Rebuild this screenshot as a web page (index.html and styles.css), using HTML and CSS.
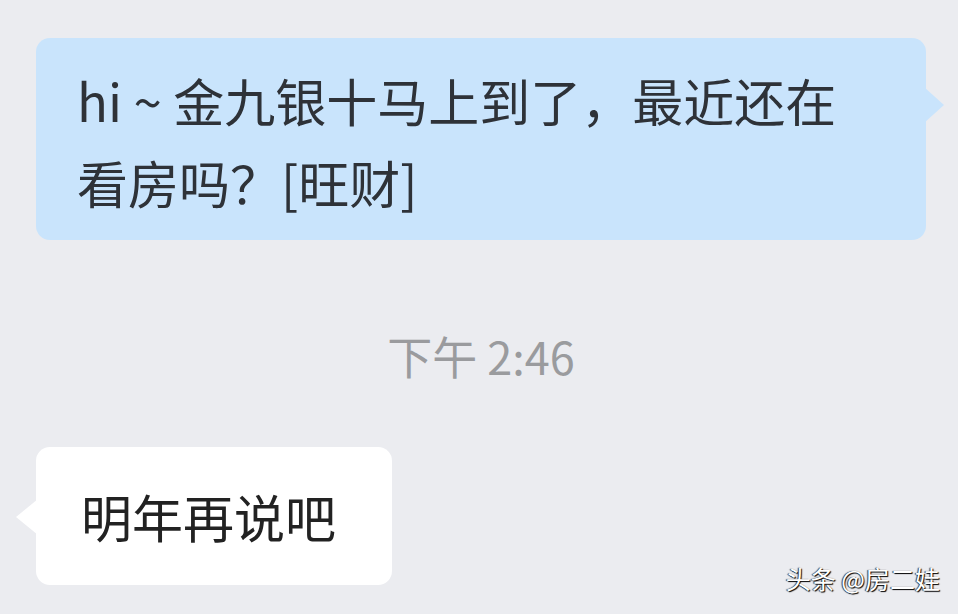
FILE: index.html
```html
<!DOCTYPE html>
<html lang="zh-CN">
<head>
  <meta charset="UTF-8" />
  <title>聊天</title>
  <link rel="stylesheet" href="styles.css">
</head>
<body>
  <div class="chat">
    <div class="row row-right">
      <div class="bubble bubble-blue">hi ~ 金九银十马上到了，最近还在<br>看房吗？[旺财]</div>
    </div>
    <div class="time">下午 2:46</div>
    <div class="row row-left">
      <div class="bubble bubble-white">明年再说吧</div>
    </div>
  </div>
  <div class="mark">头条 @房二娃</div>
</body>
</html>
```

FILE: styles.css
```css
body {
  margin: 0;
  width: 958px;
  height: 614px;
  overflow: hidden;
  background: #ebecf0;
  font-family: "Noto Sans CJK SC", "Noto Sans", sans-serif;
  position: relative;
}

.chat {
  display: flex;
  flex-direction: column;
  padding: 38px 32px 0 36px;
}

.row {
  display: flex;
}

.bubble {
  position: relative;
  border-radius: 14px;
  color: #2e3238;
}

.bubble-blue {
  width: 890px;
  box-sizing: border-box;
  height: 202px;
  padding: 21px 30px 0 41px;
  font-size: 51px;
  line-height: 82px;
  background: #c9e4fc;
}

.bubble-blue::after {
  content: "";
  position: absolute;
  right: -18px;
  top: 49px;
  border-left: 20px solid #c9e4fc;
  border-top: 18px solid transparent;
  border-bottom: 18px solid transparent;
}

.time {
  margin-top: 88px;
  text-align: center;
  font-size: 45px;
  line-height: 56px;
  color: #9a9b9e;
}

.row-left {
  margin-top: 63px;
}

.bubble-white {
  width: 356px;
  box-sizing: border-box;
  height: 138px;
  padding: 0 0 0 45px;
  line-height: 138px;
  background: #ffffff;
  font-size: 51px;
  color: #222;
}

.bubble-white::before {
  content: "";
  position: absolute;
  left: -20px;
  top: 52px;
  border-right: 22px solid #ffffff;
  border-top: 18px solid transparent;
  border-bottom: 18px solid transparent;
}

.mark {
  position: absolute;
  right: 18px;
  bottom: 18px;
  font-size: 25px;
  color: #ffffff;
  text-shadow: 1px 1px 1px #000, -1px 0 1px #333;
}
```
